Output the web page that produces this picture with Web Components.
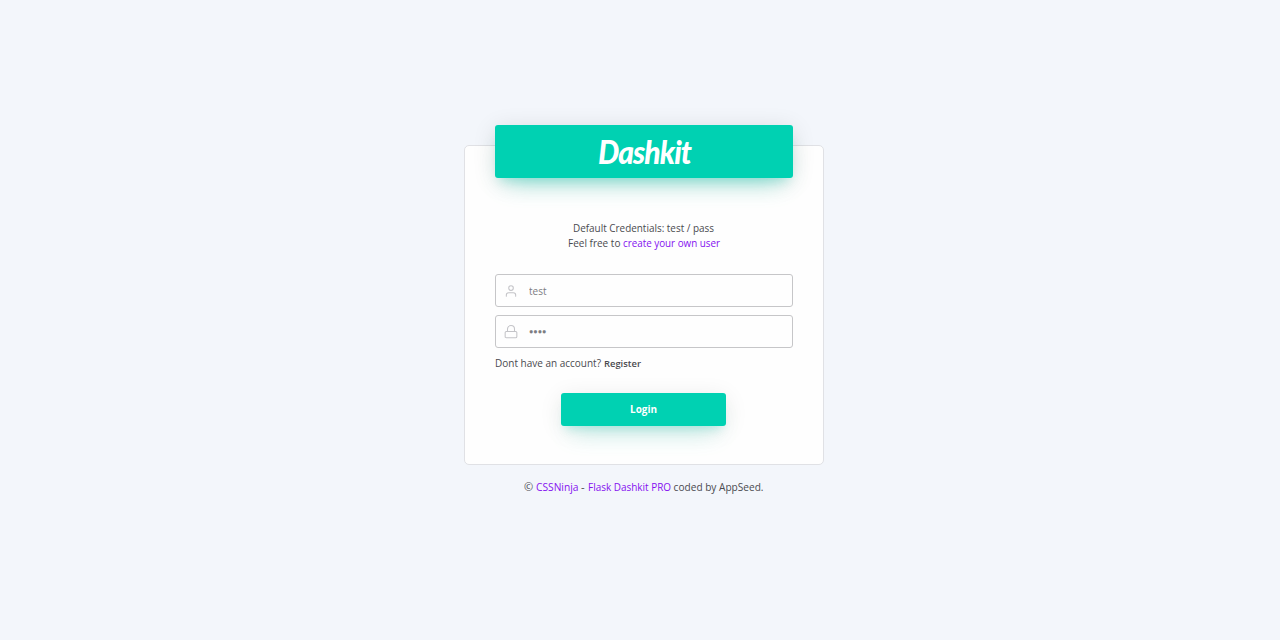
<!DOCTYPE html>
<html lang="en">
<head>
<meta charset="utf-8">
<title>Dashkit Login</title>
<style>
html,body{margin:0;height:100%;background:#f3f6fb}
body{font-family:"Open Sans","Noto Sans",sans-serif;font-size:11px;color:#4a4a4f;overflow:hidden}
</style>
</head>
<body>
<login-page></login-page>
<script>
const define=(name,html,setup)=>customElements.define(name,class extends HTMLElement{
  constructor(){super();this.attachShadow({mode:'open'}).innerHTML=html;if(setup)setup(this);}
});

/* One line of text, condensed or widened to the width given in w. */
define('fit-line',`<style>
:host{display:inline-block;white-space:pre;vertical-align:top;text-align:left}
span{display:inline-block;white-space:pre;transform-origin:0 50%}
</style><span><slot></slot></span>`,el=>{
  el.style.width=el.getAttribute('w')+'px';
  queueMicrotask(()=>{
    const s=el.shadowRoot.querySelector('span');
    s.style.transform='scaleX('+(+el.getAttribute('w')/s.getBoundingClientRect().width)+')';
  });
});

define('brand-banner',`<style>
:host{display:flex;align-items:center;justify-content:center;height:53px;border-radius:3px;background:#00d1b2;color:#fff;
box-shadow:0 14px 26px -12px rgba(0,209,178,.42),0 4px 23px 0 rgba(0,0,0,.12),0 8px 10px -5px rgba(0,209,178,.2)}
fit-line{font:italic 900 32px/53px Lato,sans-serif;letter-spacing:-1px}
</style><fit-line w="93"><slot></slot></fit-line>`);

define('icon-field',`<style>
:host{display:flex;align-items:center;box-sizing:border-box;height:33px;border:1px solid #c6c6c8;border-radius:3px;background:#fefefe;color:#7d7d82;padding-left:8px;line-height:31px}
::slotted(svg){width:14px;height:14px;margin-right:10.5px;fill:none;stroke:#c4c4c8;stroke-width:1.8;stroke-linecap:round;stroke-linejoin:round}
</style><slot name="icon"></slot><slot></slot>`);

define('primary-button',`<style>
:host{display:block;width:165px;height:33px;border-radius:3px;background:#00d1b2;color:#fff;text-align:center;font-weight:700;line-height:32px;
box-shadow:0 14px 26px -12px rgba(0,209,178,.42),0 4px 23px 0 rgba(0,0,0,.09),0 8px 10px -5px rgba(0,209,178,.2)}
</style><slot></slot>`);

define('login-card',`<style>
:host{display:flex;flex-direction:column;box-sizing:border-box;width:360px;height:320px;border:1px solid #e0e1e5;border-radius:5px;background:#fefefe;padding:0 30px}
brand-banner{margin-top:-21px}
.hint{margin-top:42px;margin-right:1px;text-align:center;line-height:15px;height:30px}
.hint div{height:15px}
.a{color:#8510f0}
.fields{display:grid;gap:8px;margin-top:24px}
.reg{display:flex;align-items:center;gap:3px;margin:7px 0 0 -.5px;height:15px;line-height:15px}
.reg .b{font-size:9.5px;font-weight:600;padding-top:1px}
primary-button{margin:23px 0 0 66px}
.pw{font-size:7.5px}
</style>
<brand-banner>Dashkit</brand-banner>
<div class="hint"><div><fit-line w="141">Default Credentials: test / pass</fit-line></div>
<div><fit-line w="55">Feel free to </fit-line><fit-line class="a" w="97">create your own user</fit-line></div></div>
<div class="fields">
<icon-field><svg slot="icon" viewBox="0 0 24 24"><path d="M20 21v-2a4 4 0 0 0-4-4H8a4 4 0 0 0-4 4v2"/><circle cx="12" cy="7" r="4"/></svg><fit-line w="17.5">test</fit-line></icon-field>
<icon-field><svg slot="icon" viewBox="0 0 24 24"><rect x="2" y="11" width="20" height="11" rx="2"/><path d="M6 11V7a6 6 0 0 1 12 0v4"/></svg><fit-line class="pw" w="17.5">●●●●</fit-line></icon-field>
</div>
<div class="reg"><fit-line w="106">Dont have an account?</fit-line><fit-line class="b" w="37">Register</fit-line></div>
<primary-button><fit-line w="27">Login</fit-line></primary-button>`);

define('page-credit',`<style>
:host{display:flex;line-height:15px;margin:14px 1px 0 0}
.a{color:#8510f0}
</style><fit-line w="12">© </fit-line><fit-line class="a" w="42.5">CSSNinja</fit-line><fit-line w="9.5"> - </fit-line><fit-line class="a" w="83">Flask Dashkit PRO</fit-line><fit-line w="92.5"> coded by AppSeed.</fit-line>`);

define('login-page',`<style>
:host{display:flex;flex-direction:column;align-items:center;box-sizing:border-box;height:640px;padding:145px 0 0 8px}
</style><login-card></login-card><page-credit></page-credit>`);
</script>
</body>
</html>
